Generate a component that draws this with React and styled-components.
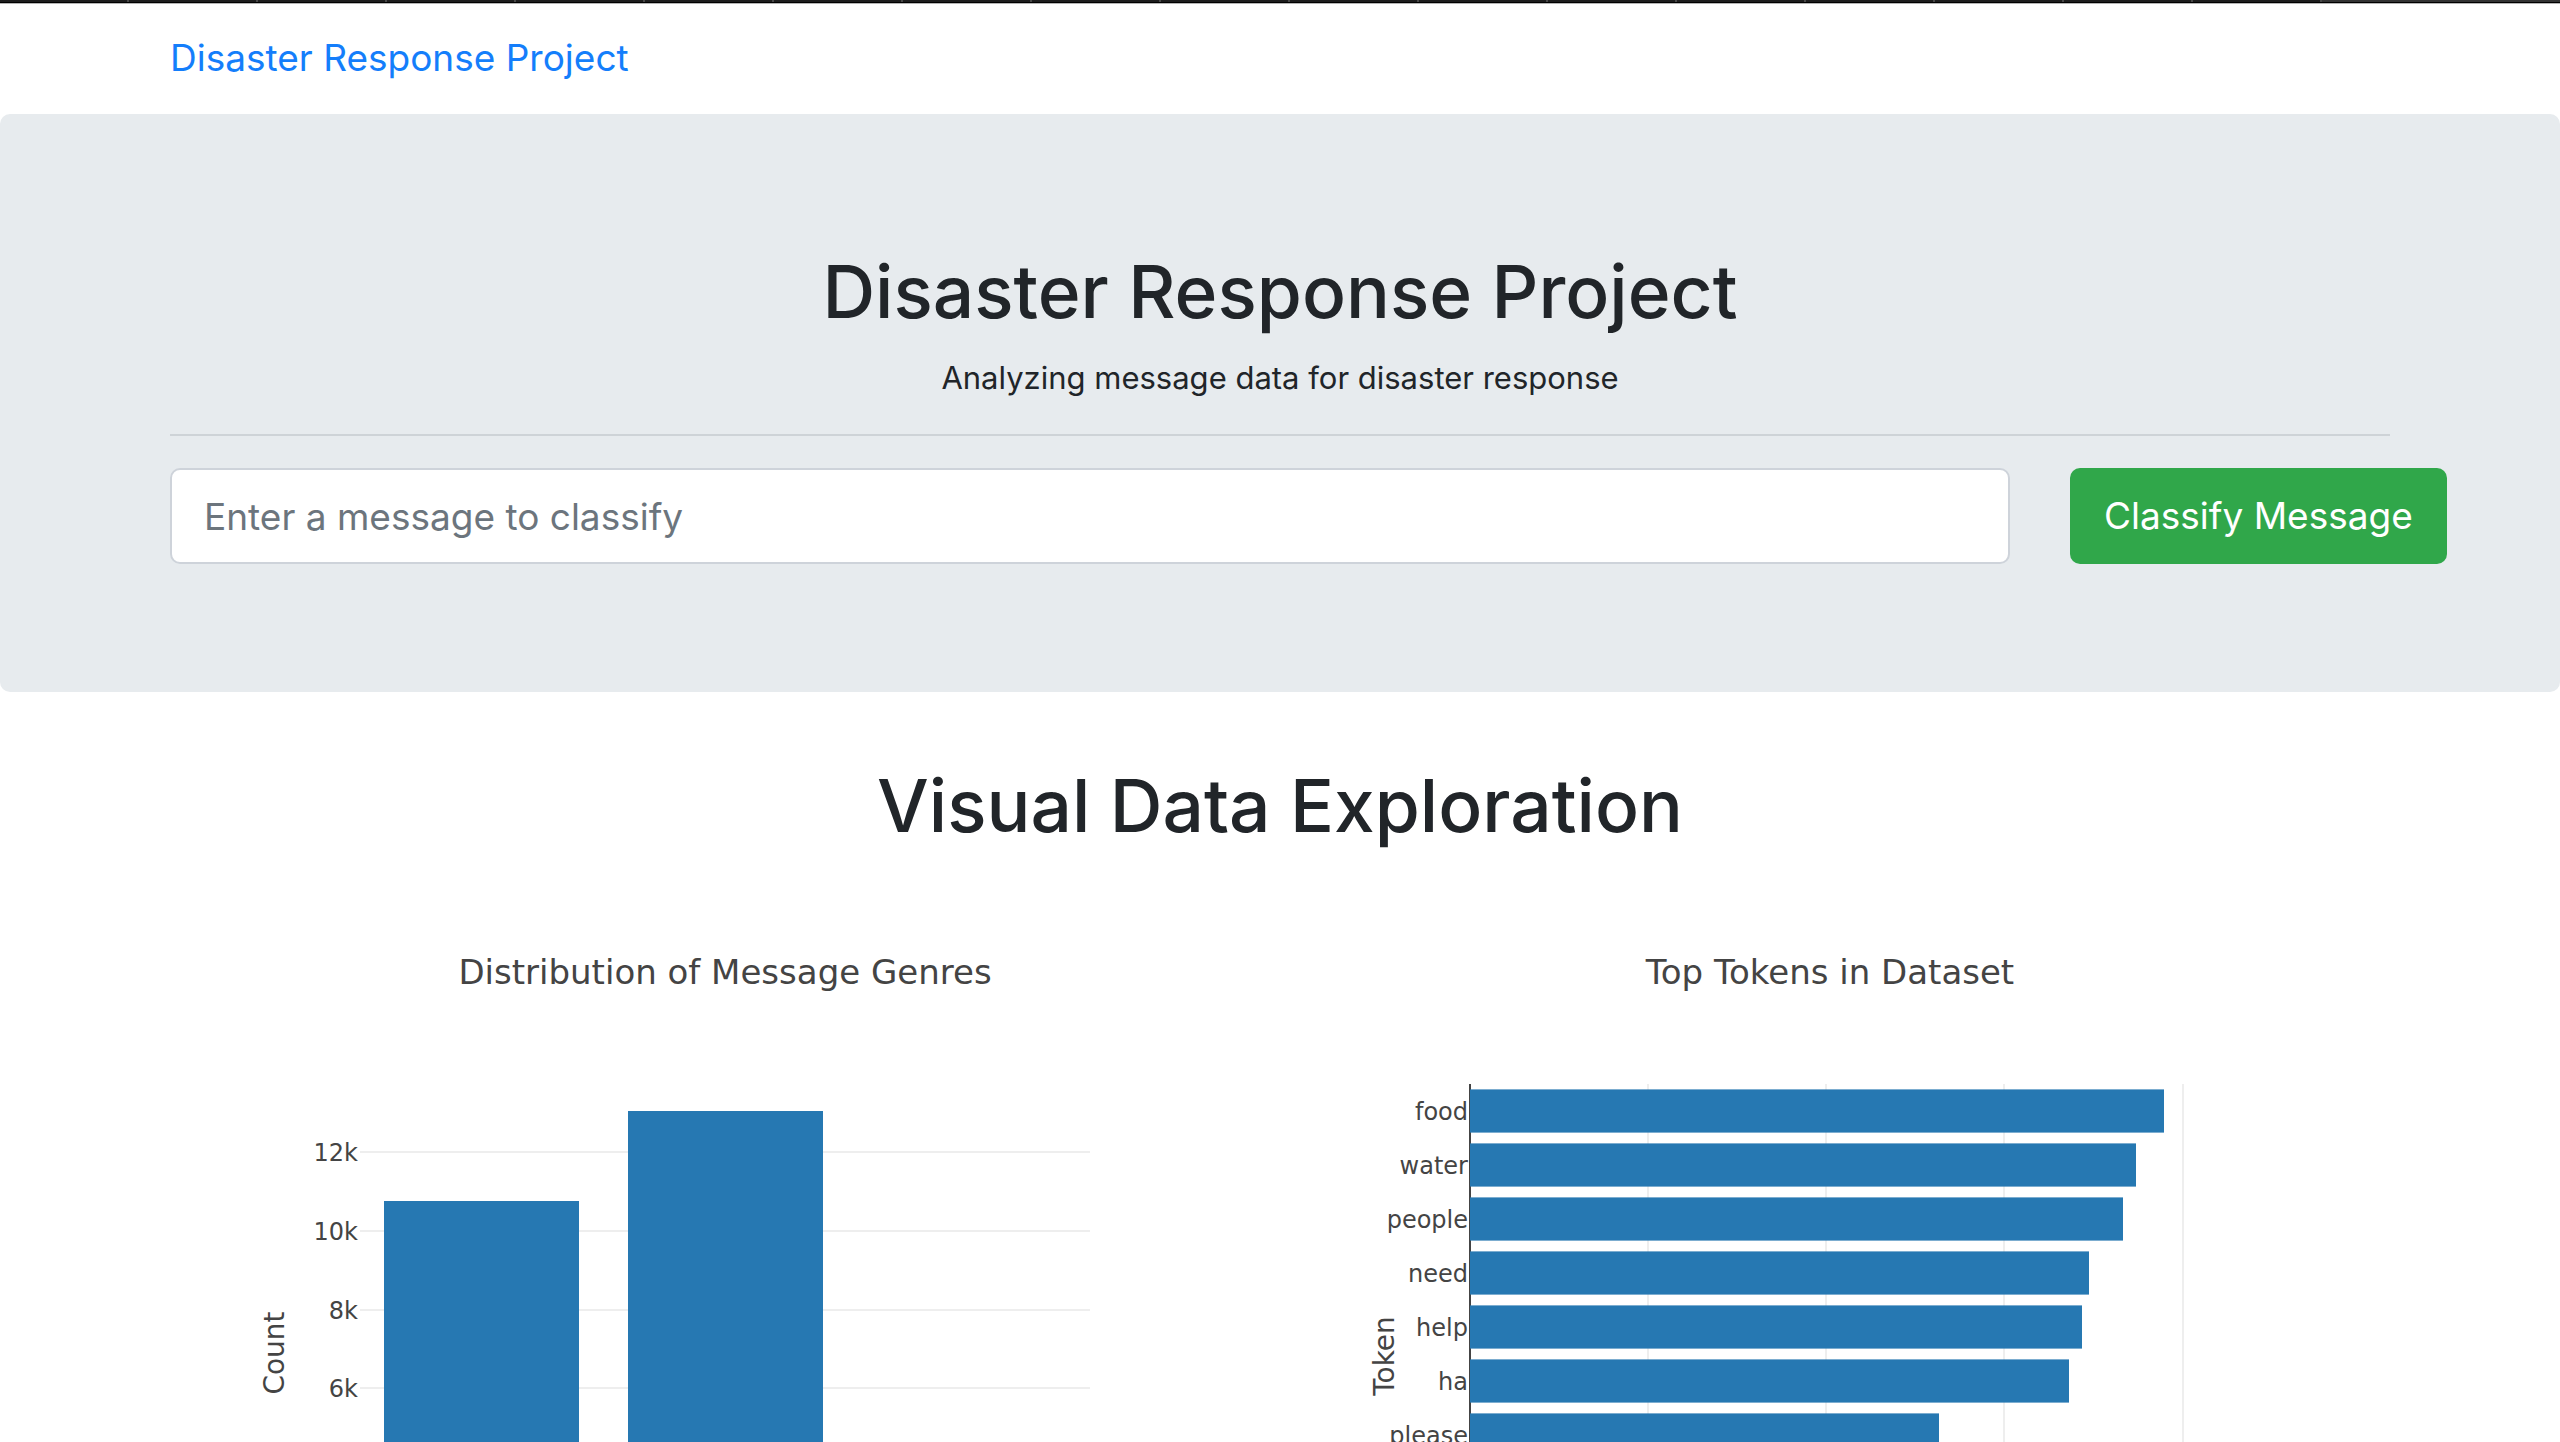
import React from "react";
import styled, { createGlobalStyle } from "styled-components";

const GlobalStyle = createGlobalStyle`
  *, *::before, *::after { box-sizing: border-box; }
  body {
    margin: 0;
    background: #fff;
    color: #212529;
    font-family: Inter, "Liberation Sans", sans-serif;
    font-size: 32px;
    line-height: 48px;
  }
`;

const TabStrip = styled.div`
  display: flex;
  height: 4px;
  background: #1c1c1c;
  border-bottom: 1px solid #b4b4b4;
  box-shadow: inset 0 -1px 0 #000;
`;

const Tab = styled.span`
  flex: ${(p) => (p.$active ? "0 0 238px" : "1 1 0")};
  height: 2px;
  background: ${(p) => (p.$active ? "#333" : "#1c1c1c")};
  border-right: ${(p) => (p.$active ? "0" : "2px solid #484848")};
`;

const Container = styled.div`
  width: 100%;
  max-width: 2280px;
  margin: 0 auto;
  padding: 0 30px;
`;

const Navbar = styled.nav`
  padding: 24px 0 26px;
`;

const Brand = styled.a`
  display: inline-block;
  color: #147efb;
  font-size: 37px;
  line-height: 60px;
  text-decoration: none;
  vertical-align: top;
`;

const Jumbotron = styled.header`
  padding: 128px 0;
  background: #e7ebee;
  border-radius: 10px;
`;

const Heading = styled.h1`
  margin: 0;
  padding: 2px 0 14px;
  font-size: 73px;
  font-weight: 500;
  line-height: 96px;
  text-align: center;
`;

const Lead = styled.p`
  margin: 0;
  font-size: 31px;
  text-align: center;
`;

const Rule = styled.hr`
  height: 2px;
  margin: 32px 0;
  border: 0;
  background: #ced3d7;
`;

const Form = styled.form`
  display: grid;
  grid-template-columns: 10fr 2fr;
  margin: 0 -30px;
`;

const Column = styled.div`
  min-width: 0;
  padding: 0 30px;
`;

const MessageInput = styled.input`
  display: block;
  width: 100%;
  height: 96px;
  padding: 16px 32px;
  border: 2px solid #ced3da;
  border-radius: 10px;
  background: #fff;
  color: #495057;
  font: inherit;
  font-size: 37px;
  &::placeholder { color: #6c757d; opacity: 1; }
`;

const SubmitButton = styled.button`
  display: block;
  height: 96px;
  padding: 0 34px;
  border: 0;
  border-radius: 10px;
  background: #30a74a;
  color: #fff;
  font: inherit;
  font-size: 37px;
  white-space: nowrap;
`;

const Exploration = styled.section`
  padding-top: 64px;
`;

const Charts = styled.div`
  display: grid;
  grid-template-columns: 1fr 1fr;
  gap: 60px;
  padding: 16px 30px 0;
`;

const ChartSvg = styled.svg`
  display: block;
  width: 100%;
  height: auto;
  font-family: "DejaVu Sans", Verdana, sans-serif;
`;

const ChartText = styled.text`
  fill: #444;
  font-size: ${(p) => p.$size}px;
  text-anchor: ${(p) => p.$anchor || "middle"};
`;

const Bar = styled.rect`
  fill: #2678b2;
`;

const GridLine = styled.path`
  stroke: #eee;
  stroke-width: 2;
`;

const AxisLine = styled.path`
  stroke: #444;
  stroke-width: 2;
`;

const CHART_HEIGHT = 558;

const countTicks = [
  { label: "12k", y: 268 },
  { label: "10k", y: 347 },
  { label: "8k", y: 426 },
  { label: "6k", y: 504 },
];

const genreBars = [
  { x: 184, y: 317 },
  { x: 428, y: 227 },
];

const tokens = [
  { label: "food", width: 694 },
  { label: "water", width: 666 },
  { label: "people", width: 653 },
  { label: "need", width: 619 },
  { label: "help", width: 612 },
  { label: "ha", width: 599 },
  { label: "please", width: 469 },
];

const tokenGrid = [338, 516, 694, 873];

function GenreChart() {
  return (
    <ChartSvg viewBox={`0 0 1050 ${CHART_HEIGHT}`} role="img" aria-label="Distribution of Message Genres">
      <ChartText $size={34} x="525" y="100">Distribution of Message Genres</ChartText>
      {countTicks.map((t) => (
        <g key={t.label}>
          <GridLine d={`M160 ${t.y}H890`} />
          <ChartText $size={24} $anchor="end" x="158" y={t.y + 9}>{t.label}</ChartText>
        </g>
      ))}
      {genreBars.map((b) => (
        <Bar key={b.x} x={b.x} y={b.y} width="195" height={CHART_HEIGHT - b.y} />
      ))}
      <ChartText $size={28} transform="translate(84 469) rotate(-90)">Count</ChartText>
    </ChartSvg>
  );
}

function TokenChart() {
  return (
    <ChartSvg viewBox={`0 0 1050 ${CHART_HEIGHT}`} role="img" aria-label="Top Tokens in Dataset">
      <ChartText $size={34} x="520" y="100">Top Tokens in Dataset</ChartText>
      {tokenGrid.map((x) => (
        <GridLine key={x} d={`M${x} 200V${CHART_HEIGHT}`} />
      ))}
      <AxisLine d={`M160 200V${CHART_HEIGHT}`} />
      {tokens.map((t, i) => (
        <g key={t.label}>
          <Bar x="160" y={205.4 + i * 54} width={t.width} height="43.2" />
          <ChartText $size={24} $anchor="end" x="158" y={236 + i * 54}>{t.label}</ChartText>
        </g>
      ))}
      <ChartText $size={28} transform="translate(84 472) rotate(-90)">Token</ChartText>
    </ChartSvg>
  );
}

export default function App() {
  return (
    <>
      <GlobalStyle />
      <TabStrip aria-hidden="true">
        {Array.from({ length: 18 }, (_, i) => <Tab key={i} />)}
        <Tab $active />
      </TabStrip>
      <Navbar>
        <Container>
          <Brand href="#">Disaster Response Project</Brand>
        </Container>
      </Navbar>
      <main>
        <Jumbotron>
          <Container>
            <Heading>Disaster Response Project</Heading>
            <Lead>Analyzing message data for disaster response</Lead>
            <Rule />
            <Form onSubmit={(e) => e.preventDefault()}>
              <Column>
                <MessageInput type="text" name="query" aria-label="Message" placeholder="Enter a message to classify" />
              </Column>
              <Column>
                <SubmitButton type="submit">Classify Message</SubmitButton>
              </Column>
            </Form>
          </Container>
        </Jumbotron>
        <Exploration>
          <Container>
            <Heading as="h2">Visual Data Exploration</Heading>
            <Charts>
              <GenreChart />
              <TokenChart />
            </Charts>
          </Container>
        </Exploration>
      </main>
    </>
  );
}
